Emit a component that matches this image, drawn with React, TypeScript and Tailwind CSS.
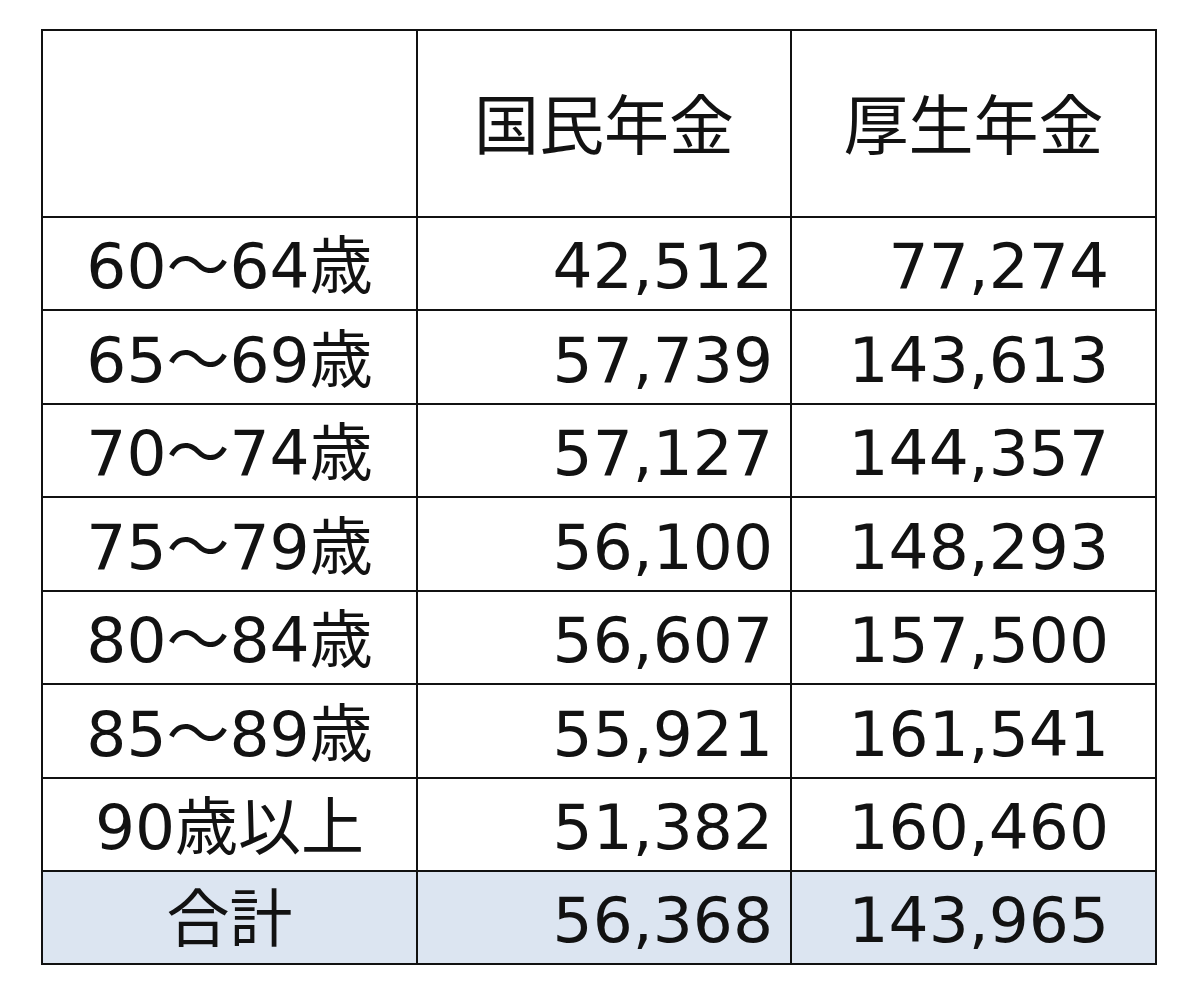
import React from "react";

type Row = { label: string; kokumin: string; kousei: string };

const rows: Row[] = [
  { label: "60～64歳", kokumin: "42,512", kousei: "77,274" },
  { label: "65～69歳", kokumin: "57,739", kousei: "143,613" },
  { label: "70～74歳", kokumin: "57,127", kousei: "144,357" },
  { label: "75～79歳", kokumin: "56,100", kousei: "148,293" },
  { label: "80～84歳", kokumin: "56,607", kousei: "157,500" },
  { label: "85～89歳", kokumin: "55,921", kousei: "161,541" },
  { label: "90歳以上", kokumin: "51,382", kousei: "160,460" },
];

const cell = "border-2 border-[#111111] leading-none";

const App: React.FC = () => {
  return (
    <div
      className="min-h-screen bg-white pt-[29px] pl-[41px] text-[#121212]"
      style={{ fontFamily: '"DejaVu Sans", "Noto Sans CJK JP", sans-serif' }}
    >
      <table className="table-fixed border-collapse w-[1114px] text-[63px]">
        <colgroup>
          <col className="w-[375px]" />
          <col className="w-[374px]" />
          <col className="w-[365px]" />
        </colgroup>
        <thead>
          <tr className="h-[187px]">
            <th className={cell} />
            <th className={`${cell} font-normal text-center text-[65px] pt-[6px]`}>国民年金</th>
            <th className={`${cell} font-normal text-center text-[65px] pt-[6px]`}>厚生年金</th>
          </tr>
        </thead>
        <tbody>
          {rows.map((r, i) => (
            <tr key={r.label} className={i % 2 === 0 ? "h-[93px]" : "h-[94px]"}>
              <td className={`${cell} text-center pt-[6px]`}>{r.label}</td>
              <td className={`${cell} text-right pr-[17px] pt-[6px]`}>{r.kokumin}</td>
              <td className={`${cell} text-right pr-[46px] pt-[6px]`}>{r.kousei}</td>
            </tr>
          ))}
          {/* 合計 row */}
          <tr className="h-[93px] bg-[#dce5f1]">
            <td className={`${cell} text-center pt-[4px]`}>合計</td>
            <td className={`${cell} text-right pr-[17px] pt-[6px]`}>56,368</td>
            <td className={`${cell} text-right pr-[46px] pt-[6px]`}>143,965</td>
          </tr>
        </tbody>
      </table>
    </div>
  );
};

export default App;
